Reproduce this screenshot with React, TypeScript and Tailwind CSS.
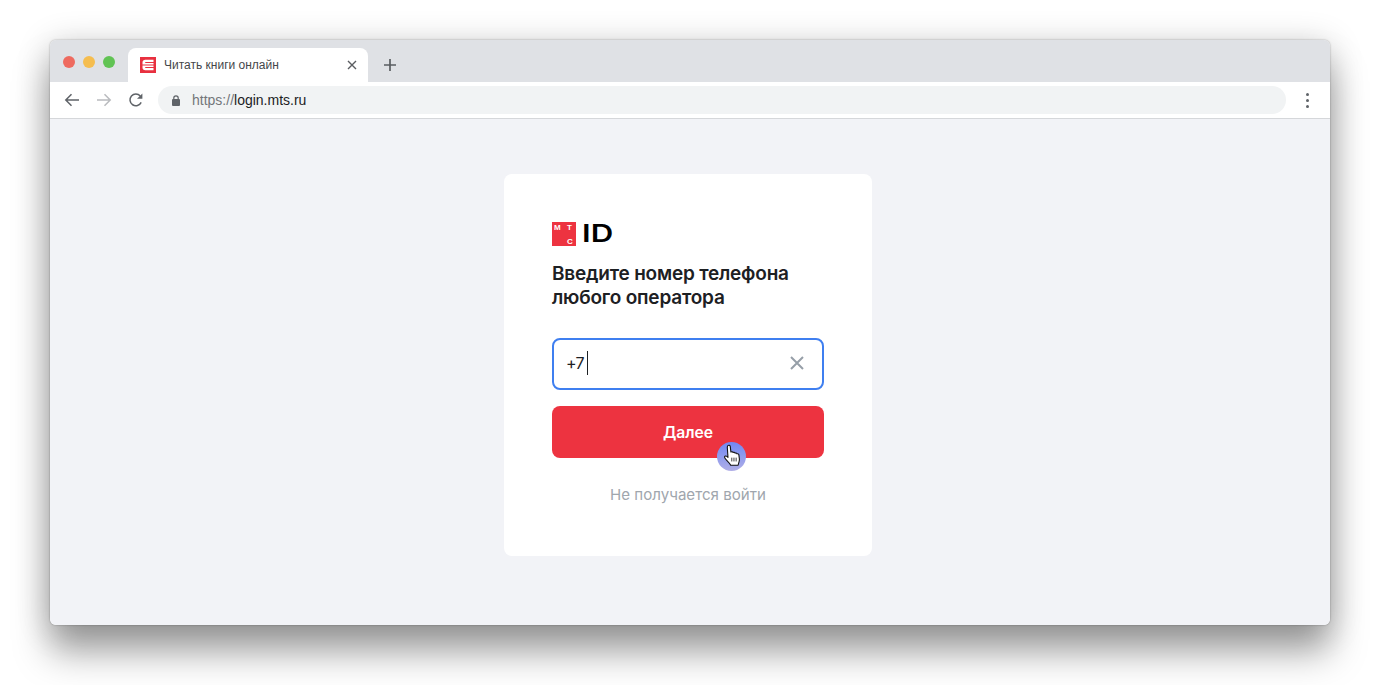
export default function App() {
  return (
    <div className="h-[685px] w-full overflow-hidden bg-white pt-10 flex justify-center items-start font-['Liberation_Sans',sans-serif]">
      <div className="relative w-[1280px] h-[585px] rounded-[6px] overflow-visible flex flex-col shadow-[0_28px_36px_rgba(0,0,0,0.34),0_4px_34px_rgba(0,0,0,0.2),0_0_2px_rgba(0,0,0,0.35)]">
        <div className="h-[42px] shrink-0 bg-[#dfe1e5] rounded-t-[6px] flex items-end pl-[13px]">
          <div className="flex gap-2 self-start mt-4">
            <div className="w-3 h-3 rounded-full bg-[#ee6a5f]" />
            <div className="w-3 h-3 rounded-full bg-[#f5bd4f]" />
            <div className="w-3 h-3 rounded-full bg-[#61c354]" />
          </div>
          <div className="relative ml-[13px] w-[240px] h-[34px] bg-white rounded-t-[8px] flex items-center pl-3 pr-[11px]">
            <svg width="16" height="16" viewBox="0 0 16 16" className="shrink-0">
              <rect width="16" height="16" fill="#e8303f" />
              <path d="M2.5 7V5.5C2.5 3.8 3.6 2.8 5.3 2.8H13.5V5H6.5C5.5 5 5 5.4 5 6H13.5V7.4H2.5Z" fill="#fff" />
              <path d="M2.5 8.6H13.5V10H5C5 10.7 5.5 11 6.5 11H13.5V13.2H5.3C3.6 13.2 2.5 12.2 2.5 10.5Z" fill="#fff" />
            </svg>
            <span className="ml-2 text-[12px] leading-4 text-[#45474a]">Читать книги онлайн</span>
            <svg width="10" height="10" viewBox="0 0 10 10" className="ml-auto" fill="none" stroke="#5a5d61" strokeWidth="1.4">
              <path d="M1 1L9 9M9 1L1 9" />
            </svg>
          </div>
          <svg width="14" height="14" viewBox="0 0 14 14" className="ml-[15px] mb-[10px]" fill="none" stroke="#5a5d61" strokeWidth="1.7">
            <path d="M7 1V13M1 7H13" />
          </svg>
        </div>

        <div className="h-[37px] shrink-0 bg-white border-b border-[#d5d7da] flex items-center">
          <svg width="16" height="16" viewBox="0 0 16 16" className="ml-[14px]" fill="none" stroke="#5f6368" strokeWidth="1.5">
            <path d="M15 8H2M7.5 2.2L1.8 8L7.5 13.8" />
          </svg>
          <svg width="16" height="16" viewBox="0 0 16 16" className="ml-4" fill="none" stroke="#b9bbbe" strokeWidth="1.5">
            <path d="M1 8H14M8.5 2.2L14.2 8L8.5 13.8" />
          </svg>
          <svg width="16" height="16" viewBox="0 0 16 16" className="ml-4" fill="none">
            <path d="M13.2 10.4A5.9 5.9 0 1 1 12.3 3.9" stroke="#5f6368" strokeWidth="1.5" />
            <path d="M14.4 1.4V6.8H9Z" fill="#5f6368" />
          </svg>
          <div className="ml-[14px] w-[1128px] h-7 rounded-full bg-[#f1f3f4] flex items-center pl-[14px]">
            <svg width="8" height="11" viewBox="0 0 8 11" className="ml-0 shrink-0">
              <path d="M1.8 4V3A2.2 2.2 0 0 1 6.2 3V4" fill="none" stroke="#5f6368" strokeWidth="1.2" />
              <rect y="4" width="8" height="7" rx="1" fill="#5f6368" />
            </svg>
            <span className="ml-[12px] text-[14px] leading-5 text-[#73767a]">
              https://<span className="text-[#1c1d1f]">login.mts.ru</span>
            </span>
          </div>
          <div className="ml-5 flex flex-col gap-[3px]">
            <div className="w-[3px] h-[3px] rounded-full bg-[#5f6368]" />
            <div className="w-[3px] h-[3px] rounded-full bg-[#5f6368]" />
            <div className="w-[3px] h-[3px] rounded-full bg-[#5f6368]" />
          </div>
        </div>

        <div className="flex-1 bg-[#f2f3f7] rounded-b-[6px] flex justify-center items-start pt-[55px] pr-1">
          <div className="w-[368px] h-[382px] bg-white rounded-[8px] p-12 font-['Inter',sans-serif]">
            <div className="flex items-center h-6">
              <div className="relative w-6 h-6 bg-[#ed3340] text-white text-[8px] leading-[8px] font-bold font-['Liberation_Sans',sans-serif]">
                <span className="absolute left-[2px] top-[2px]">М</span>
                <span className="absolute left-[15px] top-[2px]">Т</span>
                <span className="absolute left-[15px] bottom-0">С</span>
              </div>
              <span className="ml-[6px] text-[24px] leading-6 font-semibold text-black scale-x-[1.3] origin-left">ID</span>
            </div>
            <h1 className="mt-4 text-[19px] leading-6 font-semibold text-[#1d2023] tracking-[-0.2px]">
              Введите номер телефона<br />любого оператора
            </h1>
            <div className="mt-7 h-[52px] rounded-[8px] border-2 border-[#3f7ff0] bg-white flex items-center pl-3 pr-[18px] pb-[2px]">
              <span className="text-[16px] leading-6 text-[#1d2023] tracking-[-0.8px]">+7</span>
              <div className="ml-[3px] w-px h-6 bg-[#1d2023]" />
              <svg width="14" height="14" viewBox="0 0 14 14" className="ml-auto" fill="none" stroke="#969fa8" strokeWidth="2">
                <path d="M1 1L13 13M13 1L1 13" />
              </svg>
            </div>
            <div className="relative mt-4 h-[52px] rounded-[8px] bg-[#ed3340] flex items-center justify-center pt-[2px] text-white text-[15.7px] font-semibold">
              Далее
              <div className="absolute left-[165px] top-[36px] w-[29px] h-[29px] rounded-full bg-gradient-to-b from-[#7187f3] to-[#b0aee6] flex items-center justify-center">
                <svg width="18" height="24" viewBox="0 0 16 22" className="-mt-[2px]">
                  <path d="M4.2 1.5C5 .8 6.2 1.1 6.4 2.2L7 7.4C7.6 6.9 8.7 7 9 7.8C9.6 7.3 10.6 7.6 10.8 8.4C11.4 8 12.3 8.2 12.6 9C13.3 8.7 14.2 9.1 14.3 10L14.8 14C14.9 15.8 14 17.4 13.6 19.5H6.8C6.3 18 5 16.8 3.4 15.2C2.2 14 .8 12.6 1.2 11.6C1.6 10.7 2.9 10.9 4.3 12.2L3.7 3.2C3.7 2.6 3.8 1.9 4.2 1.5Z" fill="#fff" stroke="#111" strokeWidth="1" strokeLinejoin="round" />
                  <path d="M7.8 12.5V16M9.8 12.5V16M11.8 12.5V16" stroke="#222" strokeWidth="0.8" />
                </svg>
              </div>
            </div>
            <div className="mt-[25px] text-center text-[15.1px] leading-6 text-[#a0a6ad]">Не получается войти</div>
          </div>
        </div>
      </div>
    </div>
  );
}
